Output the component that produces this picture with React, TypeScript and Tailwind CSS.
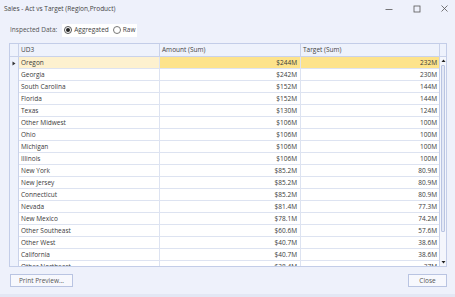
import React from "react";

const rows: [string, string, string][] = [
  ["Oregon", "$244M", "232M"],
  ["Georgia", "$242M", "230M"],
  ["South Carolina", "$152M", "144M"],
  ["Florida", "$152M", "144M"],
  ["Texas", "$130M", "124M"],
  ["Other Midwest", "$106M", "100M"],
  ["Ohio", "$106M", "100M"],
  ["Michigan", "$106M", "100M"],
  ["Illinois", "$106M", "100M"],
  ["New York", "$85.2M", "80.9M"],
  ["New Jersey", "$85.2M", "80.9M"],
  ["Connecticut", "$85.2M", "80.9M"],
  ["Nevada", "$81.4M", "77.3M"],
  ["New Mexico", "$78.1M", "74.2M"],
  ["Other Southeast", "$60.6M", "57.6M"],
  ["Other West", "$40.7M", "38.6M"],
  ["California", "$40.7M", "38.6M"],
  ["Other Northeast", "$38.4M", "37M"],
];

export default function App() {
  return (
    <div
      className="w-[455px] h-[297px] bg-[#eef1fb] flex flex-col text-[#3a3a3a] overflow-hidden"
      style={{ fontFamily: '"Open Sans", "Noto Sans", sans-serif' }}
    >
      {/* title bar */}
      <div className="h-[17px] shrink-0 flex items-center pl-[4px] pr-[7px]">
        <span className="text-[6.5px] text-[#444] flex-1">Sales - Act vs Target (Region,Product)</span>
        <div className="flex items-center gap-[20px]">
          <svg width="8" height="8" viewBox="0 0 8 8"><path d="M0.5 4.5H7.5" stroke="#555" strokeWidth="0.8" /></svg>
          <svg width="8" height="8" viewBox="0 0 8 8"><rect x="1" y="1" width="6" height="6" fill="none" stroke="#555" strokeWidth="0.8" /></svg>
          <svg width="7" height="7" viewBox="0 0 7 7"><path d="M0.5 0.5L6.5 6.5M6.5 0.5L0.5 6.5" stroke="#555" strokeWidth="0.8" /></svg>
        </div>
      </div>
      {/* inspected data */}
      <div className="h-[26px] shrink-0 flex items-center pl-[10px]">
        <span className="text-[6.5px] text-[#555] mr-[5px]">Inspected Data:</span>
        <div className="bg-white h-[13px] flex items-center px-[2px] gap-[2px]">
          <span className="w-[8px] h-[8px] rounded-full border border-[#555] flex items-center justify-center">
            <span className="w-[4px] h-[4px] rounded-full bg-[#222]" />
          </span>
          <span className="text-[6.5px] text-[#444]">Aggregated</span>
          <span className="w-[8px] h-[8px] rounded-full border border-[#777] ml-[2px]" />
          <span className="text-[6.5px] text-[#444]">Raw</span>
        </div>
      </div>
      {/* grid */}
      <div className="ml-[9px] w-[438px] h-[224px] shrink-0 border border-[#c3cde8] bg-white flex overflow-hidden">
        <div className="flex-1 flex flex-col overflow-hidden">
          <div className="h-[13px] shrink-0 flex bg-[#eef2fc] border-b border-[#c9d2ea] text-[6.5px] text-[#444]">
            <div className="w-[9px] border-r border-[#c9d2ea]" />
            <div className="w-[141px] border-r border-[#c9d2ea] pl-[2px] flex items-center">UD3</div>
            <div className="w-[141px] border-r border-[#c9d2ea] pl-[2px] flex items-center">Amount (Sum)</div>
            <div className="flex-1 pl-[2px] flex items-center">Target (Sum)</div>
          </div>
          {rows.map((r, i) => {
            const sel = i === 0;
            return (
              <div key={r[0]} className="h-[12px] flex shrink-0 text-[6.5px] text-[#3a3a3a]">
                <div className="w-[9px] bg-[#eef2fc] border-r border-[#c9d2ea] flex items-center justify-center">
                  {sel && (
                    <svg width="4" height="5" viewBox="0 0 4 5"><path d="M0.5 0.5L3.5 2.5L0.5 4.5Z" fill="#333" /></svg>
                  )}
                </div>
                <div className={`w-[141px] border-r border-b border-[#dde3f1] pl-[2px] flex items-center ${sel ? "bg-[#fdf1cf]" : ""}`}>{r[0]}</div>
                <div className={`w-[141px] border-r border-b border-[#dde3f1] pr-[3px] flex items-center justify-end ${sel ? "bg-[#fde38b]" : ""}`}>{r[1]}</div>
                <div className={`flex-1 border-b border-[#dde3f1] pr-[2px] flex items-center justify-end ${sel ? "bg-[#fde38b]" : ""}`}>{r[2]}</div>
              </div>
            );
          })}
        </div>
        {/* scrollbar */}
        <div className="w-[7px] border-l border-[#c9d2ea] bg-[#f4f6fc] flex flex-col items-center">
          <div className="h-[13px] shrink-0 w-full bg-[#eef2fc] border-b border-[#c9d2ea]" />
          <svg width="5" height="6" viewBox="0 0 5 6" className="mt-[1px] shrink-0"><path d="M0.5 4L2.5 1.5L4.5 4Z" fill="#222" /></svg>
          <div className="w-[4px] h-[167px] shrink-0 mt-[1px] bg-[#e4e9f6] border border-[#b9c4e2] rounded-[1px]" />
          <div className="flex-1" />
          <svg width="5" height="6" viewBox="0 0 5 6" className="mb-[1px] shrink-0"><path d="M0.5 2L2.5 4.5L4.5 2Z" fill="#222" /></svg>
        </div>
      </div>
      {/* buttons */}
      <div className="flex justify-between items-center pl-[10px] pr-[8px] mt-[7px] shrink-0">
        <button className="h-[13px] w-[63px] bg-[#f7f8fd] border border-[#b9c4e2] text-[6.5px] text-[#555]">Print Preview...</button>
        <button className="h-[13px] w-[39px] bg-[#f7f8fd] border border-[#b9c4e2] text-[6.5px] text-[#555]">Close</button>
      </div>
      <div className="flex-1" />
      <div className="h-[3px] bg-[#e3e7f4]" />
    </div>
  );
}
